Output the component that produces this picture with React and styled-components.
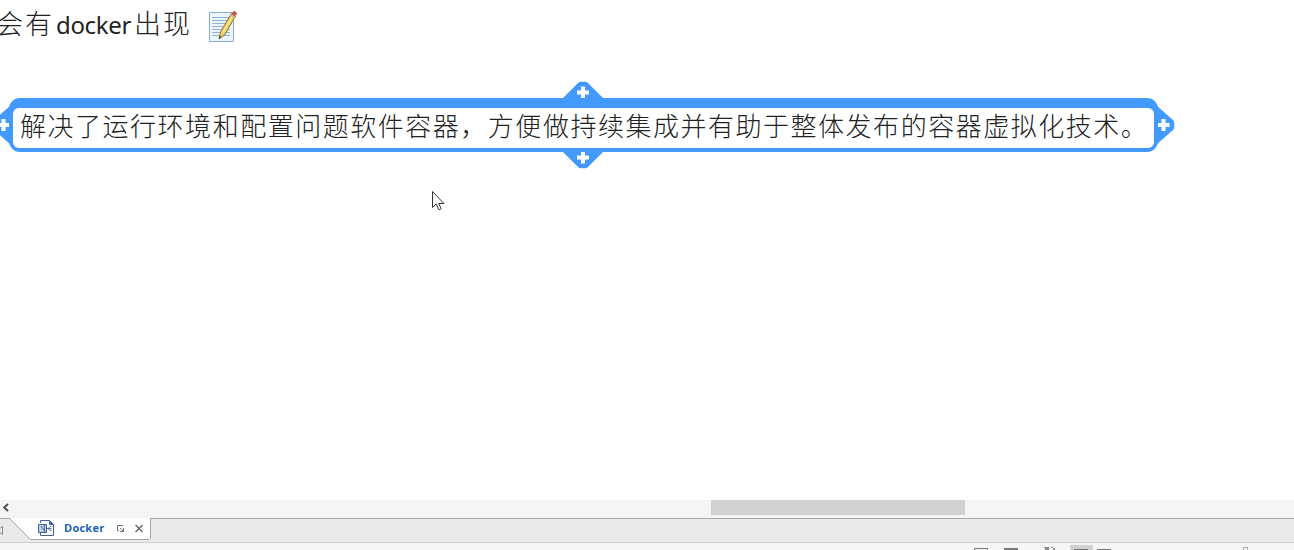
import React from "react";
import styled, { createGlobalStyle } from "styled-components";

const Global = createGlobalStyle`
  * { box-sizing: border-box; }
  body { margin: 0; background: #fff; overflow: hidden; }
  svg { display: block; flex: none; }
`;
const cjk = `"Noto Sans CJK SC", sans-serif`;

const Page = styled.div`
  display: flex;
  flex-direction: column;
  width: 1294px;
  height: 550px;
  overflow: hidden;
  background: #fff;
  font-family: "Open Sans", ${cjk};
`;
const Canvas = styled.main`
  position: relative;
  height: 500px;
  overflow: hidden;
  color: #222;
`;
const Topic = styled.div`
  position: absolute;
  left: -4px;
  top: 4px;
  display: flex;
  align-items: center;
  height: 40px;
  white-space: nowrap;
`;
const Han = styled.span`
  width: ${(p) => p.$width}px;
  font: 300 27px/38px ${cjk};
  padding-bottom: 2px;
  letter-spacing: 1.9px;
`;
const Latin = styled.span`
  width: 78px;
  font: 400 24px/40px "Noto Sans", sans-serif;
  letter-spacing: -0.35px;
  padding-top: 1px;
`;
const NoteIcon = styled.svg`
  margin: 2px 0 0 16px;
  width: 30px;
  height: 34px;
`;
const Node = styled.div`
  position: absolute;
  left: 9px;
  top: 98px;
  width: 1149px;
  height: 54px;
  border: solid #429aff;
  border-width: 10px 4px 4px;
  border-radius: 11px;
  background: #429aff;
`;
const NodeText = styled.div`
  height: 40px;
  padding-left: 7px;
  border-radius: 6px;
  background: #fff;
  font: 300 26px/34px ${cjk};
  letter-spacing: 1.52px;
  white-space: nowrap;
`;
const Handle = styled.svg`
  position: absolute;
  left: ${(p) => p.$x}px;
  top: ${(p) => p.$y}px;
  overflow: visible;
`;
const Pointer = styled.svg`
  position: absolute;
  left: 431px;
  top: 190px;
`;
const ScrollTrack = styled.div`
  display: flex;
  height: 18px;
  background: #f5f5f5;
`;
const ScrollArrow = styled.svg`
  width: 12px;
  height: 15px;
`;
const ScrollThumb = styled.div`
  width: 254px;
  height: 15px;
  margin-left: 699px;
  background: #d1d1d1;
`;
const TabStrip = styled.div`
  position: relative;
  height: 25px;
  background: #eaeaea;
  border-top: 1px solid #a9a9a9;
  border-bottom: 1px solid #cfcfcf;
`;
const TabShape = styled.svg`
  position: absolute;
  left: 0;
  top: -1px;
`;
const Tab = styled.div`
  position: relative;
  display: flex;
  align-items: center;
  height: 18px;
  padding-left: 37px;
`;
const TabLabel = styled.span`
  width: 52px;
  margin-left: 9px;
  color: #1763bd;
  font: 700 11px/18px "Open Sans", sans-serif;
  letter-spacing: 0.25px;
`;
const StatusBar = styled.footer`
  height: 7px;
  background: #f5f5f5;
`;

const handles = [
  { x: 583, y: 98.5, deg: 0, base: 22 },
  { x: 583, y: 151, deg: 180, base: 22 },
  { x: 1157, y: 125, deg: 90, base: 20 },
  { x: 10, y: 125, deg: 270, base: 20 },
];

function AddHandle({ x, y, deg, base }) {
  return (
    <Handle $x={x} $y={y} width="1" height="1">
      <g transform={`rotate(${deg})`}>
        <path d={`M${-base} 1 L-5-16 Q-4-17.3-2-17.3 H2 Q4-17.3 5-16 L${base} 1Z`} fill="#429aff" />
        <path d="M-6-6.5H6M0-12.5V-.5" stroke="#fff" strokeWidth="4" />
      </g>
    </Handle>
  );
}

function Note() {
  return (
    <NoteIcon viewBox="0 0 30 34">
      <path d="M1.5 4.5h24v29h-24z" fill="#edf5fc" stroke="#8eabd0" />
      <path d="M4 9.5h18M4 12.5h18M4 15.5h18M4 18.5h18M4 21.5h18M4 24.5h18M4 27.5h18" stroke="#8eb0d9" />
      <path d="M11 31l1.5-7L23.5 5.5l4 2.5L16.5 27z" fill="#f2cf53" stroke="#8c7138" />
      <path d="M15 24.5L24.5 8" stroke="#fff0a0" strokeWidth="1.5" />
      <path d="M23.5 6l2-3q3 0 3.5 2.5l-2 3z" fill="#c9564c" />
      <path d="M22.5 7l4 2.5" stroke="#b6b6b6" strokeWidth="1.4" />
      <path d="M11 31l.7-3 1.8 1z" fill="#333" />
    </NoteIcon>
  );
}

export default function App() {
  return (
    <Page>
      <Global />
      <Canvas>
        <Topic>
          <Han $width={60}>会有</Han>
          <Latin>docker</Latin>
          <Han $width={58}>出现</Han>
          <Note />
        </Topic>
        {handles.map((h) => <AddHandle key={h.deg} {...h} />)}
        <Node>
          <NodeText>解决了运行环境和配置问题软件容器，方便做持续集成并有助于整体发布的容器虚拟化技术。</NodeText>
        </Node>
        <Pointer width="15" height="22">
          <path d="M1.5 1.5v16l3.7-3.6 2.4 5.4q1.4.9 2.5-.7l-2.3-5.1h5.1z" fill="#fff" stroke="#333" />
        </Pointer>
      </Canvas>
      <ScrollTrack>
        <ScrollArrow viewBox="0 0 12 15">
          <path d="M8 4L4.2 7.5 8 11" fill="none" stroke="#505050" strokeWidth="2" />
        </ScrollArrow>
        <ScrollThumb />
      </ScrollTrack>
      <TabStrip>
        <TabShape width="152" height="23">
          <path d="M9.5 0L30.5 21.5H149L150.5 20V0Z" fill="#fff" />
          <path d="M9.5 .5L30.5 21.5H149L150.5 20V0" fill="none" stroke="#a4a4a4" />
          <path d="M-3 12.5L2.5 8.5V16.5Z" fill="none" stroke="#888" />
        </TabShape>
        <Tab>
          <svg width="18" height="18" viewBox="0 0 18 18">
            <path d="M3.5 4V1.5h9l4 4v11h-13V14" fill="#fff" stroke="#42609c" />
            <path d="M12.5 1.5v4h4" fill="#42609c" stroke="#42609c" />
            <path d="M1.5 5.5h8v8h-8z" fill="#c3d0e8" stroke="#42609c" />
            <path d="M4 7l3.5 5M7.5 6v7" stroke="#5c76ab" strokeWidth="1.2" />
            <path d="M14.5 7.5H13l-1 1v2l1 1h1.5M10 9.5h4.5" fill="none" stroke="#596b8d" />
          </svg>
          <TabLabel>Docker</TabLabel>
          <svg width="9" height="10" viewBox="0 0 9 10">
            <path d="M7 2.5H1.5v5H3M7.5 5v3.5H4M4 5l3 3" fill="none" stroke="#707070" />
          </svg>
          <svg width="26" height="10" viewBox="0 0 26 10">
            <path d="M10.5 2l7 7M17.5 2l-7 7" stroke="#606060" strokeWidth="1.3" />
          </svg>
        </Tab>
      </TabStrip>
      <StatusBar>
        <svg width="1294" height="7" shapeRendering="crispEdges">
          <path d="M974.5 8V5.5h13V8" fill="none" stroke="#777" />
          <path d="M1004 5h14v2h-14z" fill="#777" />
          <path d="M1044 4h5v1h-5zM1045 5h4v2h-4zM1051 4h2v1h-2zM1053 5h2v2h-2z" fill="#888" />
          <path d="M1070 2h23v5h-23z" fill="#d1d1d1" />
          <path d="M1074 6h14v1h-14zM1097 6h14v1h-14z" fill="#707070" />
          <path d="M1243.5 8V4.5h4V8" fill="none" stroke="#aaa" />
        </svg>
      </StatusBar>
    </Page>
  );
}
